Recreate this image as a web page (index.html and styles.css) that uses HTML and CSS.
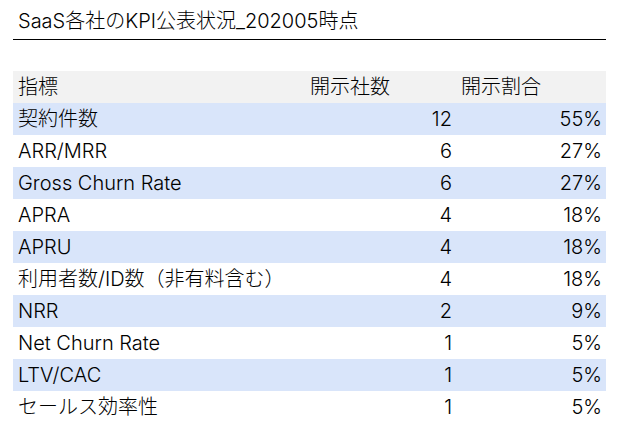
FILE: index.html
```html
<!DOCTYPE html>
<html lang="ja">
<head>
<meta charset="utf-8">
<link rel="stylesheet" href="styles.css">
</head>
<body>
<div class="page">
  <h1 class="title">SaaS各社のKPI公表状況_202005時点</h1>
  <table class="kpi">
    <thead>
      <tr><th class="c1">指標</th><th class="c2">開示社数</th><th class="c3">開示割合</th></tr>
    </thead>
    <tbody>
      <tr class="band"><td class="c1">契約件数</td><td class="c2">12</td><td class="c3">55%</td></tr>
      <tr><td class="c1">ARR/MRR</td><td class="c2">6</td><td class="c3">27%</td></tr>
      <tr class="band"><td class="c1">Gross Churn Rate</td><td class="c2">6</td><td class="c3">27%</td></tr>
      <tr><td class="c1">APRA</td><td class="c2">4</td><td class="c3">18%</td></tr>
      <tr class="band"><td class="c1">APRU</td><td class="c2">4</td><td class="c3">18%</td></tr>
      <tr><td class="c1">利用者数/ID数（非有料含む）</td><td class="c2">4</td><td class="c3">18%</td></tr>
      <tr class="band"><td class="c1">NRR</td><td class="c2">2</td><td class="c3">9%</td></tr>
      <tr><td class="c1">Net Churn Rate</td><td class="c2">1</td><td class="c3">5%</td></tr>
      <tr class="band"><td class="c1">LTV/CAC</td><td class="c2">1</td><td class="c3">5%</td></tr>
      <tr><td class="c1">セールス効率性</td><td class="c2">1</td><td class="c3">5%</td></tr>
    </tbody>
  </table>
</div>
</body>
</html>
```
FILE: styles.css
```css
html, body {
  margin: 0;
  padding: 0;
  background: #ffffff;
}
.page {
  width: 593px;
  margin-left: 13px;
  font-family: "Inter", "Noto Sans CJK JP", sans-serif;
  font-weight: 300;
  color: #000000;
}
.title {
  margin: 0;
  height: 40px;
  box-sizing: border-box;
  padding: 7px 0 0 5px;
  font-size: 20px;
  font-weight: 300;
  line-height: 28px;
  border-bottom: 1px solid #000000;
}
.kpi {
  margin-top: 31px;
  width: 593px;
  border-collapse: collapse;
  table-layout: fixed;
  font-size: 20px;
}
.kpi th, .kpi td {
  height: 32px;
  padding: 0 4px 0 5px;
  line-height: 32px;
  font-weight: 300;
  white-space: nowrap;
  box-sizing: border-box;
}
.kpi thead tr {
  background: #f2f2f2;
}
.kpi th {
  text-align: left;
}
.kpi .c1 { width: 292px; }
.kpi .c2 { width: 151px; }
.kpi .c3 { width: 150px; }
.kpi td.c2, .kpi td.c3 {
  text-align: right;
}
.kpi tr.band {
  background: #d9e5fa;
}
```
